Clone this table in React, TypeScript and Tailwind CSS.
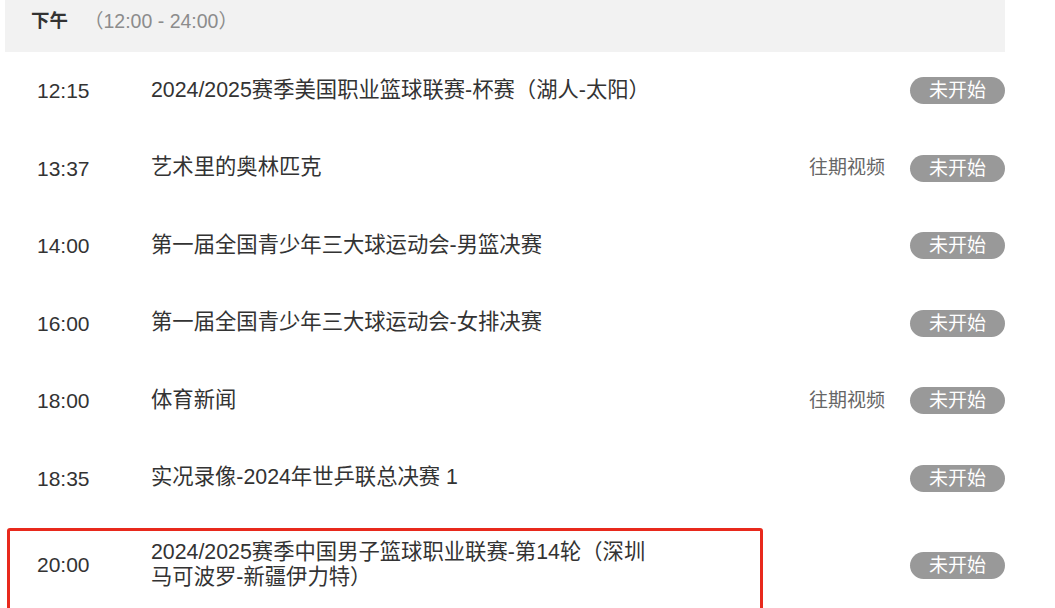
import React from "react";

type Row = { time: string; title: React.ReactNode; replay?: boolean };

const rows: Row[] = [
  { time: "12:15", title: "2024/2025赛季美国职业篮球联赛-杯赛（湖人-太阳）" },
  { time: "13:37", title: "艺术里的奥林匹克", replay: true },
  { time: "14:00", title: "第一届全国青少年三大球运动会-男篮决赛" },
  { time: "16:00", title: "第一届全国青少年三大球运动会-女排决赛" },
  { time: "18:00", title: "体育新闻", replay: true },
  { time: "18:35", title: "实况录像-2024年世乒联总决赛 1" },
];

const font = { fontFamily: '"Liberation Sans", "Noto Sans CJK SC", sans-serif' };

function Badge() {
  return (
    <span className="flex h-[27px] w-[95px] items-center justify-center rounded-full bg-[#999999] text-[19px] leading-none text-white">
      未开始
    </span>
  );
}

function Right({ replay }: { replay?: boolean }) {
  return (
    <div className="ml-auto flex items-center">
      {replay && <span className="mr-[25px] text-[19px] text-[#666666]">往期视频</span>}
      <Badge />
    </div>
  );
}

export default function App() {
  return (
    <div className="h-[608px] w-[1055px] overflow-hidden bg-white" style={font}>
      <div className="w-[1005px]">
        <div className="ml-[5px] flex h-[52px] items-start bg-[#f2f2f2] pl-[26px] pt-[9px] leading-[24px]">
          <span className="text-[18.5px] font-bold text-[#333333]">下午</span>
          <span className="ml-[16px] text-[19.5px] text-[#8c8c8c]">（12:00 - 24:00）</span>
        </div>
        {rows.map((r) => (
          <div key={r.time} className="flex h-[77.5px] items-center">
            <span className="w-[151px] pl-[37px] text-[21px] text-[#333333]">{r.time}</span>
            <span className="text-[21.33px] text-[#333333]">{r.title}</span>
            <Right replay={r.replay} />
          </div>
        ))}
        <div className="relative flex h-[96px] items-center">
          <span className="w-[151px] pl-[37px] text-[21px] text-[#333333]">20:00</span>
          <span className="text-[21.33px] leading-[25px] text-[#333333]">
            2024/2025赛季中国男子篮球职业联赛-第14轮（深圳
            <br />
            马可波罗-新疆伊力特）
          </span>
          <Right />
          <div className="pointer-events-none absolute left-[7px] top-[11px] h-[100px] w-[756px] rounded-[3px] border-[3px] border-[#e8291c]" />
        </div>
      </div>
    </div>
  );
}
